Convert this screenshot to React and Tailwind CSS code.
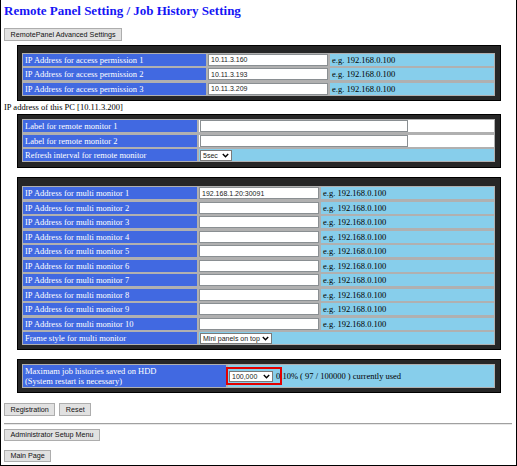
import React from "react";

const serif = "font-['Liberation_Serif','Times_New_Roman',serif]";
const sans = "font-['Liberation_Sans',Arial,sans-serif]";

function Chevron() {
  return (
    <svg width="7" height="5" viewBox="0 0 7 5" className="mr-[2px]">
      <polyline points="0.8,1 3.5,3.8 6.2,1" fill="none" stroke="#000" strokeWidth="1.4" />
    </svg>
  );
}

function FakeSelect({ value, width }) {
  return (
    <div
      className={`flex items-center justify-between h-[11px] bg-white border border-[#7a7a7a] pl-[2px] text-[7px] leading-none text-[#222] ${sans} ${width}`}
    >
      <span>{value}</span>
      <Chevron />
    </div>
  );
}

function Btn({ children }) {
  return (
    <button
      className={`block h-[12.5px] px-[5.5px] bg-[#e1e1e1] border border-[#adadad] text-[7.2px] leading-none text-[#111] ${sans}`}
    >
      {children}
    </button>
  );
}

function Label({ children }) {
  return (
    <div
      className={`bg-[#4169e1] text-white text-[8.5px] leading-[12px] pl-[2px] whitespace-nowrap overflow-hidden ${serif}`}
    >
      {children}
    </div>
  );
}

function Example() {
  return (
    <div className={`bg-[#87ceeb] text-black text-[8.5px] leading-[12px] pl-[2px] ${serif}`}>
      e.g. 192.168.0.100
    </div>
  );
}

function Field({ value = "", width = "w-full" }) {
  return (
    <input
      readOnly
      value={value}
      className={`block h-[12px] bg-white border border-[#8a8f92] px-[2px] text-[7px] text-[#222] outline-none ${sans} ${width}`}
    />
  );
}

const access = ["10.11.3.160", "10.11.3.193", "10.11.3.209"];
const monitors = ["192.168.1.20:30091", "", "", "", "", "", "", "", "", ""];

export default function App() {
  return (
    <div className="relative w-[517px] h-[466px] overflow-hidden bg-white border-x border-b border-black pl-[3px] leading-none">
      <h1 className={`mt-[3px] text-[13px] leading-[16px] font-bold text-[#1515f5] ${serif}`}>
        Remote Panel Setting / Job History Setting
      </h1>

      <div className="mt-[9px] flex">
        <Btn>RemotePanel Advanced Settings</Btn>
      </div>

      {/* access permission */}
      <div className="mt-[4px] ml-[13px] w-[484px] bg-[#262626] border border-black pt-[7px] pb-[4px] pl-[4px] pr-[5px]">
        <div className="bg-[#b0b0b0] p-[1px] grid grid-cols-[183px_120px_1fr] auto-rows-[12px] gap-x-[2px] gap-y-[2.5px]">
          {access.map((ip, i) => (
            <React.Fragment key={ip}>
              <Label>IP Address for access permission {i + 1}</Label>
              <Field value={ip} />
              <Example />
            </React.Fragment>
          ))}
        </div>
      </div>

      <div className={`text-[8.5px] leading-[12px] text-black ${serif}`}>
        IP address of this PC [10.11.3.200]
      </div>

      {/* remote monitor */}
      <div className="mt-[1.5px] ml-[13px] w-[484px] bg-[#262626] border border-black pt-[4px] pb-[5px] pl-[4px] pr-[5px]">
        <div className="bg-[#b0b0b0] p-[1px] grid grid-cols-[174px_1fr] auto-rows-[12px] gap-x-[2px] gap-y-[2.5px]">
          <Label>Label for remote monitor 1</Label>
          <div className="bg-white flex pl-[1px]">
            <Field width="w-[208px]" />
          </div>
          <Label>Label for remote monitor 2</Label>
          <div className="bg-white flex pl-[1px]">
            <Field width="w-[208px]" />
          </div>
          <Label>Refresh interval for remote monitor</Label>
          <div className="bg-[#87ceeb] flex items-center pl-[1px]">
            <FakeSelect value="5sec" width="w-[32px]" />
          </div>
        </div>
      </div>

      {/* multi monitor */}
      <div className="mt-[9px] ml-[13px] w-[484px] bg-[#262626] border border-black pt-[8px] pb-[4px] pl-[4px] pr-[5px]">
        <div className="bg-[#b0b0b0] p-[1px] grid grid-cols-[174px_120px_1fr] auto-rows-[12px] gap-x-[2px] gap-y-[2.5px]">
          {monitors.map((ip, i) => (
            <React.Fragment key={i}>
              <Label>IP Address for multi monitor {i + 1}</Label>
              <Field value={ip} />
              <Example />
            </React.Fragment>
          ))}
          <Label>Frame style for multi monitor</Label>
          <div className="col-span-2 bg-[#87ceeb] flex items-center pl-[1px]">
            <FakeSelect value="Mini panels on top" width="w-[72px]" />
          </div>
        </div>
      </div>

      {/* job history */}
      <div className="mt-[9px] ml-[13px] w-[484px] bg-[#262626] border border-black pt-[4px] pb-[4px] pl-[4px] pr-[5px]">
        <div className="bg-[#b0b0b0] p-[1px] grid grid-cols-[203px_1fr] gap-x-[2px]">
          <div className={`bg-[#4169e1] text-white text-[8.5px] leading-[10px] h-[22px] py-[1px] pl-[2px] ${serif}`}>
            Maximam job histories saved on HDD
            <br />
            (System restart is necessary)
          </div>
          <div className="bg-[#87ceeb] flex items-center pl-[1px]">
            <div className="relative">
              <FakeSelect value="100,000" width="w-[44px]" />
              <div className="absolute left-[-3px] top-[-4px] w-[56px] h-[18px] border-2 border-[#e30000]" />
            </div>
            <span className={`ml-[3px] text-[8.5px] text-black ${serif}`}>
              0.10% ( 97 / 100000 ) currently used
            </span>
          </div>
        </div>
      </div>

      <div className="mt-[10px] flex gap-[4px]">
        <Btn>Registration</Btn>
        <Btn>Reset</Btn>
      </div>

      <div className="mt-[7px] mr-[4px] border-t border-b border-t-[#a0a0a0] border-b-[#e8e8e8]" />

      <div className="mt-[4px] flex">
        <Btn>Administrator Setup Menu</Btn>
      </div>

      <div className="mt-[8.5px] flex">
        <Btn>Main Page</Btn>
      </div>
    </div>
  );
}
